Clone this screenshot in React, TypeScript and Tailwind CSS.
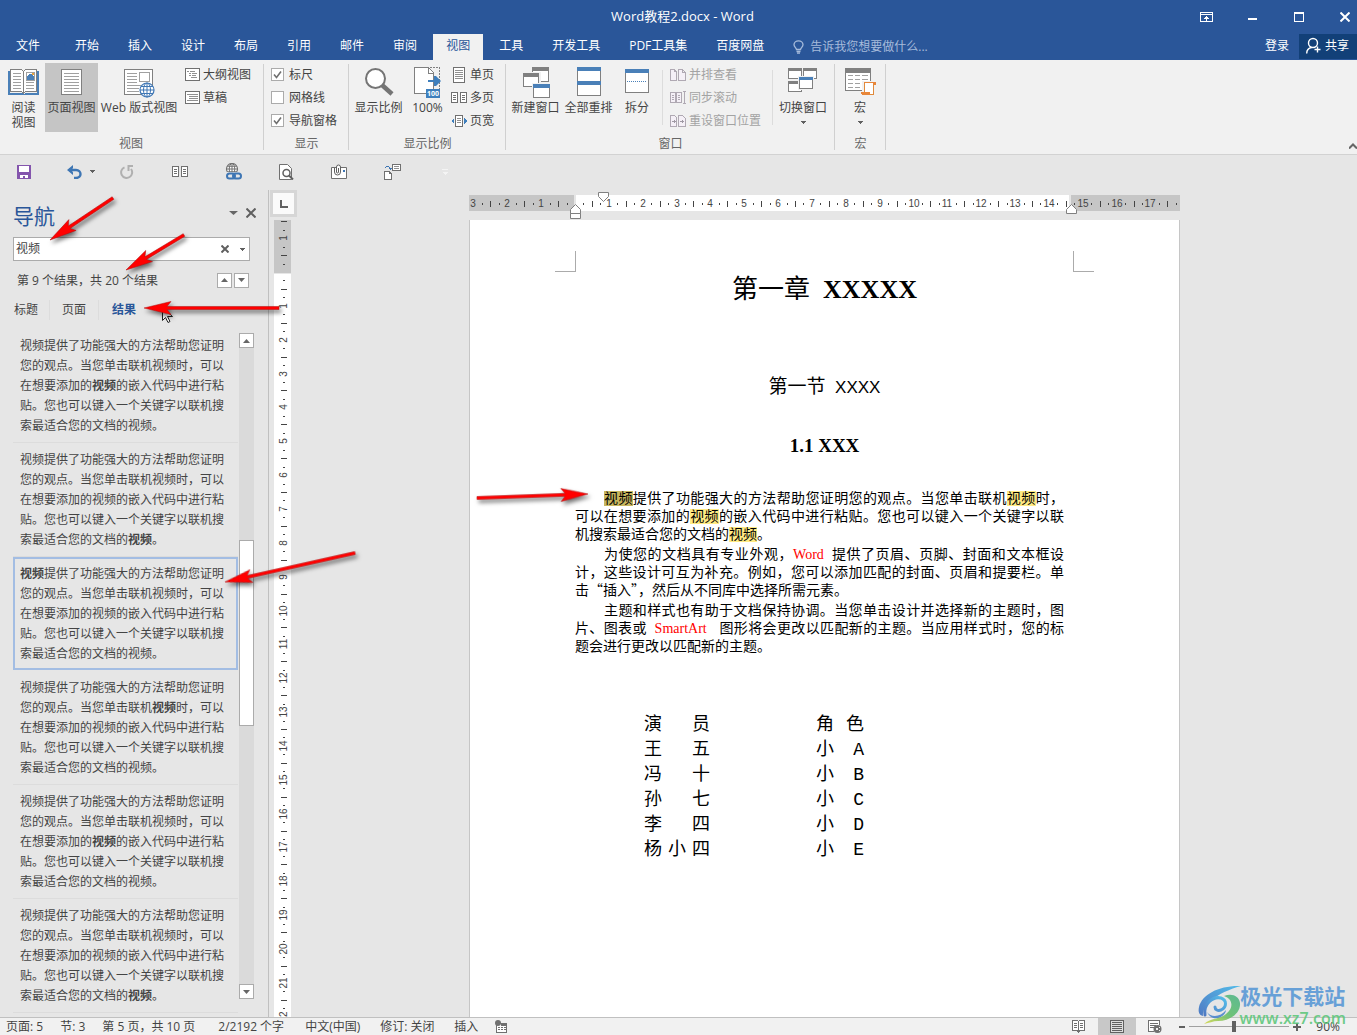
import { Fragment, useState } from "react";
import type { ReactNode } from "react";
import clsx from "clsx";

const TABS = ["开始", "插入", "设计", "布局", "引用", "邮件", "审阅", "视图", "工具", "开发工具", "PDF工具集", "百度网盘"];

// text of one search result, cut around every hit
const RESULT_PARTS = [
  "",
  "提供了功能强大的方法帮助您证明您的观点。当您单击联机",
  "时，可以在想要添加的",
  "的嵌入代码中进行粘贴。您也可以键入一个关键字以联机搜索最适合您的文档的",
  "。",
];

// index of the bold hit in each result
const RESULTS = [2, 3, 0, 1, 2, 3];

const CAST = [
  ["演员", "角色"],
  ["王五", "小 A"],
  ["冯十", "小 B"],
  ["孙七", "小 C"],
  ["李四", "小 D"],
  ["杨小四", "小 E"],
];

const STATUS = [
  { label: "页面: 5", width: "min-w-[37px]" },
  { label: "节: 3", width: "min-w-[25px]" },
  { label: "第 5 页，共 10 页", width: "min-w-[99px]" },
  { label: "2/2192 个字", width: "min-w-[70px]" },
  { label: "中文(中国)", width: "min-w-[58px]" },
  { label: "修订: 关闭", width: "min-w-[57px]" },
  { label: "插入", width: "min-w-[24px]" },
];

const CM = 33.85;

function Icon({ w, h, children, crisp = true }: { w: number; h: number; children: ReactNode; crisp?: boolean }) {
  return (
    <svg
      width={w}
      height={h}
      viewBox={`0 0 ${w} ${h}`}
      fill="none"
      shapeRendering={crisp ? "crispEdges" : "auto"}
      aria-hidden="true"
      className="shrink-0"
    >
      {children}
    </svg>
  );
}

/* ---------- Ribbon icons ---------- */

const ReadIcon = () => (
  <Icon w={31} h={32}>
    <path d="M0 4h2v22h12l1 1h1l1-1h12V4h2v24H0z" fill="#4a80b8" />
    <path d="M2.5 2.5h11l2 2 2-2h11v22h-11l-2 2-2-2h-11z" fill="#fff" stroke="#808080" />
    <path d="M15.5 4v22" stroke="#808080" />
    <path d="M5 6.5h8M5 9.5h8M5 12.5h8M5 15.5h8M5 18.5h8M5 21.5h8M18 15.5h8M18 18.5h8M18 21.5h8" stroke="#a0a0a0" />
    <path d="M18.5 5.5h8v8h-8z" fill="#fff" stroke="#a0a0a0" />
    <path d="M19 12v-3l2-2h2l3 3v3h-7z" fill="#4a80b8" />
    <path d="M24 6h2v2h-2z" fill="#e8a33d" />
  </Icon>
);

const PageIcon = () => (
  <Icon w={21} h={32}>
    <path d="M.5 2.5h20v25H.5z" fill="#fff" stroke="#808080" />
    <path d="M3 6.5h15M3 9.5h15M3 12.5h15M3 15.5h15M3 18.5h15M3 21.5h15M3 24.5h15" stroke="#a0a0a0" />
  </Icon>
);

const Globe = ({ x, y, r, color }: { x: number; y: number; r: number; color: string }) => (
  <g stroke={color} shapeRendering="auto" transform={`translate(${x} ${y})`}>
    <circle r={r} fill="#fff" strokeWidth="1.2" />
    <ellipse rx={r / 2} ry={r} />
    <path d={`M0 ${-r}V${r}M${-r} 0H${r}M${-r + 1} ${-r / 2}H${r - 1}M${-r + 1} ${r / 2}H${r - 1}`} />
  </g>
);

const WebIcon = () => (
  <Icon w={31} h={32}>
    <path d="M.5 2.5h28v25H.5z" fill="#fff" stroke="#808080" />
    <path d="M3 6.5h10M3 9.5h10M3 12.5h10M3 15.5h10M3 18.5h14M3 21.5h12M3 24.5h12" stroke="#a0a0a0" />
    <path d="M15.5 5.5h10v9h-10z" fill="#fff" stroke="#a0a0a0" />
    <Globe x={23} y={23} r={7} color="#3e76b4" />
  </Icon>
);

const OutlineIcon = () => (
  <Icon w={15} h={13}>
    <path d="M.5.5h14v12H.5z" fill="#fff" stroke="#707070" />
    <path d="M2 3.5h2M5 3.5h5M4 5.5h2M7 5.5h5M4 7.5h2M7 7.5h4M6 9.5h6" stroke="#909090" />
  </Icon>
);

const DraftIcon = () => (
  <Icon w={15} h={13}>
    <path d="M.5.5h14v12H.5z" fill="#fff" stroke="#707070" />
    <path d="M2 3.5h11M4 5.5h9M4 7.5h9M2 9.5h11" stroke="#909090" />
  </Icon>
);

const ZoomIcon = () => (
  <Icon w={30} h={32} crisp={false}>
    <path d="M18 18l10 9" stroke="#757575" strokeWidth="4.5" />
    <circle cx="11.5" cy="11.5" r="9.5" fill="#fff" stroke="#757575" strokeWidth="2" />
  </Icon>
);

const HundredIcon = () => (
  <Icon w={27} h={32}>
    <path d="M.5.5h14l5 5v21H.5z" fill="#fff" stroke="#808080" />
    <path d="M14.5.5v6h5" stroke="#808080" />
    <path d="M16 .5h9.5v21" stroke="#808080" strokeDasharray="2 1" />
    <path d="M14 13h6v-4h2l5 5-5 5h-2v-4h-6z" fill="#3e7fbd" shapeRendering="auto" />
    <path d="M12 22h14v9H12z" fill="#3e7fbd" />
    <text x="19" y="29" textAnchor="middle" fontSize="7" fontWeight="bold" fill="#fff">
      100
    </text>
  </Icon>
);

const OnePageIcon = () => (
  <Icon w={16} h={16}>
    <path d="M2.5.5h11v15h-11z" fill="#fff" stroke="#707070" />
    <path d="M4 3.5h8M4 5.5h8M4 7.5h8M4 9.5h8M4 11.5h8" stroke="#909090" />
  </Icon>
);

const TwoPages = ({ color = "#707070" }: { color?: string }) => (
  <Icon w={16} h={11}>
    <path d="M.5.5h6v10h-6zM9.5.5h6v10h-6z" fill="#fff" stroke={color} />
    <path d="M2 3.5h3M2 5.5h3M2 7.5h3M11 3.5h3M11 5.5h3M11 7.5h3" stroke={color} />
  </Icon>
);

const PageWidthIcon = () => (
  <Icon w={16} h={12}>
    <path d="M4.5.5h7v11h-7z" fill="#fff" stroke="#707070" />
    <path d="M6 3.5h4M6 5.5h4M6 7.5h4" stroke="#909090" />
    <path d="M3 3v6L0 6zM13 3v6l3-3z" fill="#3e7fbd" />
  </Icon>
);

const NewWindowIcon = () => (
  <Icon w={28} h={32}>
    <path d="M10.5 3v11h16V3" fill="#fff" stroke="#808080" />
    <path d="M10 0h17v4H10z" fill="#808080" />
    <path d="M0 5h19v16H0z" fill="#f1f1f1" />
    <path d="M1.5 8v11h15V8" fill="#fff" stroke="#808080" />
    <path d="M1 6h16v4H1z" fill="#808080" />
    <path d="M10 16h18v15H10z" fill="#f1f1f1" />
    <path d="M11.5 19v11h16V19" fill="#fff" stroke="#808080" />
    <path d="M11 17h17v4H11z" fill="#4a80b8" />
  </Icon>
);

const ArrangeIcon = () => (
  <Icon w={24} h={32}>
    <path d="M.5.5h23v28H.5z" fill="#fff" stroke="#808080" />
    <path d="M0 0h24v4H0zM0 14h24v4H0z" fill="#4a80b8" />
  </Icon>
);

const SplitIcon = () => (
  <Icon w={24} h={32}>
    <path d="M.5 2.5h23v23H.5z" fill="#fff" stroke="#808080" />
    <path d="M0 2h24v4H0z" fill="#4a80b8" />
    <path d="M2 14.5h20" stroke="#4a80b8" strokeDasharray="1 1" />
  </Icon>
);

const SideBySideIcon = () => (
  <Icon w={16} h={12}>
    <path d="M.5.5h4l2 2v9h-6zM8.5.5h4l3 3v8h-7zM4.5.5v2h2M12.5.5v3h3" fill="#f5f0f7" stroke="#b0a9b3" />
  </Icon>
);

const SyncIcon = () => (
  <Icon w={16} h={15}>
    <path d="M.5 2.5h5v10h-5zM6.5 2.5h5v10h-5z" fill="#f5f0f7" stroke="#b0a9b3" />
    <path d="M2 5.5h2M2 7.5h2M2 9.5h2M8 5.5h2M8 7.5h2M8 9.5h2M14.5 1v13M13 1.5h3M13 13.5h3" stroke="#b0a9b3" />
  </Icon>
);

const ResetIcon = () => (
  <Icon w={16} h={12}>
    <path d="M.5.5h4l2 2v9h-6zM8.5.5h4l3 3v8h-7z" fill="#f5f0f7" stroke="#b0a9b3" />
    <path d="M2 6.5h4M4 5v3M10 6.5h4M12 5v3" stroke="#a09aa4" />
  </Icon>
);

const SwitchIcon = () => (
  <Icon w={30} h={32}>
    <path d="M.5 1.5h13v10H.5zM15.5 1.5h13v10h-13zM.5 14.5h13v10H.5z" fill="#fff" stroke="#808080" />
    <path d="M0 1h14v3H0zM15 1h14v3H15zM0 14h14v3H0z" fill="#808080" />
    <path d="M10 9h16v14H10z" fill="#f1f1f1" />
    <path d="M11.5 10.5h13v11h-13z" fill="#fff" stroke="#808080" />
    <path d="M11 10h14v3H11z" fill="#4a80b8" />
  </Icon>
);

const MacroIcon = () => (
  <Icon w={31} h={32}>
    <path d="M.5 1.5h25v22H.5z" fill="#fff" stroke="#808080" />
    <path d="M0 1h26v5H0z" fill="#808080" />
    <path
      d="M3 8.5h5M10 8.5h5M17 8.5h6M3 12.5h5M10 12.5h5M17 12.5h6M3 16.5h5M10 16.5h5M3 20.5h5M10 20.5h5"
      stroke="#a0a0a0"
    />
    <path d="M17 14h12v14H17z" fill="#f1f1f1" />
    <path d="M19.5 15.5h9v12h-9z" fill="#fff" stroke="#e08a3c" />
    <path d="M19 15h12v3h-3v-2h-9zM16 25h9v3h-8l-1-1z" fill="#e8873a" />
  </Icon>
);

/* ---------- Ribbon parts ---------- */

const Caret = () => (
  <Icon w={6} h={3}>
    <path d="M0 0h6L3 3z" fill="#606060" />
  </Icon>
);

interface BigButtonProps {
  icon: ReactNode;
  label: ReactNode;
  className: string;
  active?: boolean;
  menu?: boolean;
}

function BigButton({ icon, label, className, active, menu }: BigButtonProps) {
  return (
    <button
      type="button"
      className={clsx(
        "flex h-[69px] shrink-0 flex-col items-center pt-1 leading-[15px] whitespace-nowrap",
        active ? "bg-[#c5c5c5]" : "hover:bg-[#dadada]",
        className
      )}
    >
      <span className="flex h-[33px] items-start">{icon}</span>
      <span>{label}</span>
      {menu && (
        <span className="mt-[6px]">
          <Caret />
        </span>
      )}
    </button>
  );
}

function SmallButton({ icon, label, disabled }: { icon: ReactNode; label: string; disabled?: boolean }) {
  return (
    <button
      type="button"
      disabled={disabled}
      className="flex h-[23px] items-center gap-[3px] whitespace-nowrap enabled:hover:bg-[#dadada] disabled:text-[#a3a3a3]"
    >
      <span className="flex w-4 justify-center">{icon}</span>
      {label}
    </button>
  );
}

function RibbonCheck({ label, defaultChecked }: { label: string; defaultChecked?: boolean }) {
  return (
    <label className="flex h-[23px] items-center gap-[5px]">
      <span className="relative flex">
        <input
          type="checkbox"
          defaultChecked={defaultChecked}
          className="peer size-[13px] appearance-none border border-[#ababab] bg-white"
        />
        <svg
          viewBox="0 0 13 13"
          className="pointer-events-none absolute inset-0 hidden size-[13px] peer-checked:block"
          fill="none"
          stroke="#707070"
          strokeWidth="1.6"
        >
          <path d="M3 6.5l2.5 3L10 3.5" />
        </svg>
      </span>
      {label}
    </label>
  );
}

function Group({ label, className, children }: { label: string; className: string; children: ReactNode }) {
  return (
    <section
      aria-label={label}
      className={clsx("relative flex h-[94px] shrink-0 flex-col justify-between pt-[3px] pb-[2px]", className)}
    >
      <div className="flex">{children}</div>
      <div className="text-center leading-4 text-[#666]">{label}</div>
      <span className="absolute top-1 right-0 bottom-1 w-px bg-[#d0d0d0]" />
    </section>
  );
}

function Ribbon() {
  return (
    <div className="flex h-[95px] shrink-0 border-b border-[#d2d2d2] bg-[#f1f1f1] text-[#444]">
      <Group label="视图" className="w-[264px] pr-1 pl-[2px]">
        <BigButton icon={<ReadIcon />} label={<>阅读<br />视图</>} className="w-[43px]" />
        <BigButton icon={<PageIcon />} label="页面视图" className="w-[53px]" active />
        <BigButton icon={<WebIcon />} label="Web 版式视图" className="w-[82px]" />
        <div className="pl-1">
          <SmallButton icon={<OutlineIcon />} label="大纲视图" />
          <SmallButton icon={<DraftIcon />} label="草稿" />
        </div>
      </Group>
      <Group label="显示" className="w-[85px]">
        <div className="pl-[7px]">
          <RibbonCheck label="标尺" defaultChecked />
          <RibbonCheck label="网格线" />
          <RibbonCheck label="导航窗格" defaultChecked />
        </div>
      </Group>
      <Group label="显示比例" className="w-[157px]">
        <BigButton icon={<ZoomIcon />} label="显示比例" className="ml-px w-[57px]" />
        <BigButton icon={<HundredIcon />} label="100%" className="w-[41px]" />
        <div className="pl-[3px]">
          <SmallButton icon={<OnePageIcon />} label="单页" />
          <SmallButton icon={<TwoPages />} label="多页" />
          <SmallButton icon={<PageWidthIcon />} label="页宽" />
        </div>
      </Group>
      <Group label="窗口" className="w-[329px]">
        <BigButton icon={<NewWindowIcon />} label="新建窗口" className="ml-[3px] w-[53px]" />
        <BigButton icon={<ArrangeIcon />} label="全部重排" className="w-[53px]" />
        <BigButton icon={<SplitIcon />} label="拆分" className="w-[44px]" />
        <span className="mt-[7px] ml-[3px] h-[55px] w-px bg-[#dcdcdc]" />
        <div className="pr-[11px] pl-[7px]">
          <SmallButton icon={<SideBySideIcon />} label="并排查看" disabled />
          <SmallButton icon={<SyncIcon />} label="同步滚动" disabled />
          <SmallButton icon={<ResetIcon />} label="重设窗口位置" disabled />
        </div>
        <span className="mt-[7px] h-[55px] w-px bg-[#dcdcdc]" />
        <BigButton icon={<SwitchIcon />} label="切换窗口" className="ml-[3px] w-[54px]" menu />
      </Group>
      <Group label="宏" className="w-[51px]">
        <BigButton icon={<MacroIcon />} label="宏" className="w-[50px]" menu />
      </Group>
      <button type="button" aria-label="折叠功能区" className="mt-auto mb-[5px] ml-auto">
        <svg width="8" height="6" fill="none" stroke="#666" strokeWidth="2" aria-hidden="true">
          <path d="M0 5.5l4-4 4 4" />
        </svg>
      </button>
    </div>
  );
}

/* ---------- Header ---------- */

function Header() {
  return (
    <header className="shrink-0 bg-[#2a5699] text-white">
      <div className="grid h-[34px] grid-cols-[1fr_auto_1fr] items-center">
        <h1 className="col-start-2 pl-2 text-[13px]">Word教程2.docx - Word</h1>
        <div className="flex items-center justify-end gap-[35px] pr-[7px]">
          <button type="button" aria-label="功能区显示选项">
            <Icon w={13} h={10}>
              <path d="M.5.5h12v9H.5zM1 2.5h11M6.5 4v5M4 6.5h5M5 5.5h3" stroke="#fff" />
            </Icon>
          </button>
          <button type="button" aria-label="最小化">
            <Icon w={10} h={10}>
              <path d="M0 6h9v2H0z" fill="#fff" />
            </Icon>
          </button>
          <button type="button" aria-label="最大化">
            <Icon w={12} h={10}>
              <path d="M1.5.5h9v9h-9zM1 1.5h10" stroke="#fff" />
            </Icon>
          </button>
          <button type="button" aria-label="关闭">
            <Icon w={10} h={10} crisp={false}>
              <path d="M.5.5l9 9m0-9l-9 9" stroke="#fff" strokeWidth="2" />
            </Icon>
          </button>
        </div>
      </div>
      <nav className="flex h-[26px] items-stretch pl-[3px] whitespace-nowrap">
        <button type="button" className="mr-[9px] px-[13px] pb-[3px]">文件</button>
        <div className="flex gap-[3px]">
          {TABS.map((tab) => (
            <button
              key={tab}
              type="button"
              className={clsx("px-[13px] pb-[3px]", tab === "视图" ? "bg-[#f1f1f1] text-[#2a5699]" : "hover:bg-[#3e6db5]")}
            >
              {tab}
            </button>
          ))}
        </div>
        <button type="button" className="ml-4 flex items-center gap-[6px] pb-px text-[#a6bbdb]">
          <Icon w={11} h={14} crisp={false}>
            <path
              d="M3.5 9.5C3.5 8 1 7 1 4.8a4.5 4 0 0 1 9 0C10 7 7.5 8 7.5 9.5zM3.5 11.5h4M4 13.2h3"
              stroke="#a6bbdb"
              strokeWidth="1.3"
            />
          </Icon>
          告诉我您想要做什么...
        </button>
        <button type="button" className="mr-[10px] ml-auto pb-[3px]">登录</button>
        <button type="button" className="mb-px flex items-center gap-1 bg-[#124078] pr-2 pb-[2px] pl-[7px]">
          <Icon w={15} h={17} crisp={false}>
            <circle cx="7" cy="6" r="4.5" stroke="#fff" strokeWidth="1.4" />
            <path d="M.7 16.5c0-3.5 2-5.5 5-6M11.5 9.5v6M8.5 12.5h6" stroke="#fff" strokeWidth="1.4" />
          </Icon>
          共享
        </button>
      </nav>
    </header>
  );
}

function QuickAccess() {
  const button = "flex h-6 w-6 items-center justify-center";
  return (
    <div className="flex h-[35px] shrink-0 items-center pb-[2px] pl-3">
      <button type="button" aria-label="保存" className={button}>
        <Icon w={14} h={14}>
          <path d="M0 0h14v14H0z" fill="#8455ad" />
          <path d="M2 1h10v6H2zM3 10h8v3H8v-2H6v2H3z" fill="#fff" />
        </Icon>
      </button>
      <button type="button" aria-label="撤消" className={clsx(button, "ml-[26px]")}>
        <Icon w={15} h={14} crisp={false}>
          <path d="M2 5h7c6 0 6 8 0 8H7" stroke="#3e76b4" strokeWidth="2.4" />
          <path d="M0 5L6 0v3L4.5 5 6 7.5V10z" fill="#3e76b4" />
        </Icon>
      </button>
      <button type="button" aria-label="撤消列表" className="flex w-[11px] justify-center">
        <Caret />
      </button>
      <div className="ml-[18px] flex gap-[29px]">
        <button type="button" aria-label="重复" className={button}>
          <Icon w={14} h={14} crisp={false}>
            <path d="M4.5 2.3A5.5 5.5 0 1 0 11 4" stroke="#b0b0b0" strokeWidth="2" />
            <path d="M7.5 0H13v2H9.5v4h-2z" fill="#b0b0b0" />
          </Icon>
        </button>
        <button type="button" aria-label="多页" className={button}>
          <TwoPages />
        </button>
        <button type="button" aria-label="超链接" className={button}>
          <Icon w={17} h={17} crisp={false}>
            <Globe x={7} y={6} r={5.5} color="#707070" />
            <path d="M2 9h15v8H2z" fill="#e6e6e6" />
            <rect x="2" y="10.5" width="8" height="5" rx="2.5" stroke="#3e76b4" strokeWidth="2" />
            <rect x="8" y="10.5" width="8" height="5" rx="2.5" stroke="#3e76b4" strokeWidth="2" />
          </Icon>
        </button>
        <button type="button" aria-label="打印预览" className={button}>
          <Icon w={15} h={16} crisp={false}>
            <path d="M.5.5h8l4 4v11H.5z" fill="#fff" stroke="#707070" />
            <circle cx="7.5" cy="9" r="3.5" fill="#fff" stroke="#606060" strokeWidth="1.5" />
            <path d="M10 11.5l4 4" stroke="#606060" strokeWidth="2" />
          </Icon>
        </button>
        <button type="button" aria-label="电子邮件附件" className={button}>
          <Icon w={17} h={16} crisp={false}>
            <path d="M.5 3.5h15v11H.5z" fill="#fff" stroke="#707070" />
            <path d="M12 6h2v2h-2z" fill="#3e76b4" />
            <path d="M3.5 4v4a3 3 0 0 0 6 0V3a2 2 0 0 0-4 0v5a1 1 0 0 0 2 0V4" fill="#fff" stroke="#606060" />
          </Icon>
        </button>
        <button type="button" aria-label="复制格式" className={button}>
          <Icon w={17} h={16}>
            <path d="M8.5.5h8v6h-8zM.5 7.5h5l2 2v6h-7zM5.5 7.5v2h2" fill="#fff" stroke="#707070" />
            <path d="M10 2.5h5M10 4.5h5" stroke="#909090" />
            <path d="M1 4c1-2 4-2 5 0" stroke="#3e76b4" />
            <path d="M4 4h4L6 6z" fill="#3e76b4" />
          </Icon>
        </button>
        <button type="button" aria-label="自定义快速访问工具栏" className={button}>
          <Icon w={6} h={6}>
            <path d="M0 0h6v1H0zM0 3h6L3 6z" fill="#f4f4f4" />
          </Icon>
        </button>
      </div>
    </div>
  );
}

/* ---------- Navigation pane ---------- */

function Arrow({ up, w = 7 }: { up?: boolean; w?: number }) {
  return (
    <svg width={w} height="4" viewBox="0 0 8 4" preserveAspectRatio="none" aria-hidden="true">
      <path d={up ? "M0 4h8L4 0z" : "M0 0h8L4 4z"} fill="#666" />
    </svg>
  );
}

function Result({ hit, selected }: { hit: number; selected: boolean }) {
  return (
    <li className={clsx("border-b", selected ? "border-transparent" : "border-[#dcdcdc]")}>
      <button
        type="button"
        className={clsx(
          "flex h-[113px] w-full items-start border-2 px-[5px] pt-[5px] text-left leading-5",
          selected ? "border-[#a3bde3]" : "border-transparent"
        )}
      >
        <span>
          {RESULT_PARTS.map((part, i) => (
            <Fragment key={i}>
              {part}
              {i < 4 && (i === hit ? <b>视频</b> : "视频")}
            </Fragment>
          ))}
        </span>
      </button>
    </li>
  );
}

function NavigationPane() {
  const [query, setQuery] = useState("视频");
  const square = "flex size-[15px] items-center justify-center border border-[#ababab] bg-white";

  return (
    <aside className="flex w-[269px] shrink-0 flex-col border-r border-[#c0c0c0] pl-[13px] text-[#444]">
      <div className="flex h-[47px] items-start pt-[13px] pr-3">
        <h2 className="flex-1 text-[21px] leading-[26px] text-[#2a5699]">导航</h2>
        <button type="button" aria-label="任务窗格选项" className="flex h-5 items-center">
          <Arrow w={9} />
        </button>
        <button type="button" aria-label="关闭" className="ml-2 flex h-5 items-center">
          <Icon w={10} h={10} crisp={false}>
            <path d="M.5.5l9 9m0-9l-9 9" stroke="#606060" strokeWidth="2" />
          </Icon>
        </button>
      </div>
      <div className="mr-[18px] flex h-6 items-center border border-[#ababab] bg-white pr-1">
        <input
          aria-label="搜索文档"
          value={query}
          onChange={(e) => setQuery(e.target.value)}
          className="min-w-0 flex-1 pl-[2px] outline-none"
        />
        <button type="button" aria-label="清除" onClick={() => setQuery("")} className="mr-[10px]">
          <Icon w={8} h={8} crisp={false}>
            <path d="M.5.5l7 7m0-7l-7 7" stroke="#606060" strokeWidth="2" />
          </Icon>
        </button>
        <button type="button" aria-label="搜索选项" className="flex">
          <Caret />
        </button>
      </div>
      <div className="mt-[9px] mr-[19px] flex h-5 items-center gap-[2px] pl-1">
        <span className="flex-1 pt-[2px] leading-5">第 9 个结果，共 20 个结果</span>
        <button type="button" aria-label="上一个" className={square}>
          <Arrow up />
        </button>
        <button type="button" aria-label="下一个" className={square}>
          <Arrow />
        </button>
      </div>
      <div className="mt-[10px] flex h-5 items-stretch pl-px leading-5">
        <button type="button" className="pr-[11px]">标题</button>
        <button type="button" className="border-x border-[#dcdcdc] px-3">页面</button>
        <button type="button" className="pl-[13px] font-bold text-[#2a5699]">结果</button>
      </div>
      <div className="mt-[9px] flex min-h-0 flex-1">
        <ol className="w-[225px] overflow-hidden">
          {RESULTS.map((hit, i) => (
            <Result key={i} hit={hit} selected={i === 2} />
          ))}
        </ol>
        <div className="mt-1 mb-[18px] ml-px flex w-[15px] flex-col bg-[#dadada]">
          <button type="button" aria-label="向上滚动" className={square}>
            <Arrow up />
          </button>
          <div className="mt-[192px] h-[186px] border border-[#ababab] bg-white" />
          <button type="button" aria-label="向下滚动" className={clsx(square, "mt-auto")}>
            <Arrow />
          </button>
        </div>
      </div>
    </aside>
  );
}

/* ---------- Rulers ---------- */

function Marks({ from, to, zero, vertical }: { from: number; to: number; zero: number; vertical?: boolean }) {
  const steps = [];
  for (let q = from * 4; q <= to * 4; q++) if (q !== 0) steps.push(q);

  return (
    <>
      {steps.map((q) => {
        const at = Math.round(zero + (q * CM) / 4);
        if (q % 4 === 0) {
          return vertical ? (
            <text key={q} transform={`translate(13 ${at}) rotate(-90)`} textAnchor="middle" fontSize="10" fill="#444">
              {Math.abs(q / 4)}
            </text>
          ) : (
            <text key={q} x={at} y="12" textAnchor="middle" fontSize="10" fill="#444">
              {Math.abs(q / 4)}
            </text>
          );
        }
        const size = q % 2 === 0 ? 6 : 2;
        return vertical ? (
          <rect key={q} x={10 - size / 2} y={at} width={size} height="1" fill="#444" />
        ) : (
          <rect key={q} x={at} y={9 - size / 2} width="1" height={size} fill="#444" />
        );
      })}
    </>
  );
}

const rulerFont = "font-['Liberation_Sans',sans-serif]";

function VerticalRuler() {
  return (
    <div className="flex w-[29px] shrink-0 flex-col">
      <button
        type="button"
        aria-label="制表符"
        className="ml-px flex h-[27px] w-[27px] items-center justify-center border-[3px] border-[#d6d6d6] bg-[#fafafa]"
      >
        <Icon w={8} h={8}>
          <path d="M1 0v7h7" stroke="#606060" strokeWidth="2" />
        </Icon>
      </button>
      <svg className={clsx("mt-[3px] ml-[5px] min-h-0 w-[17px] flex-1", rulerFont)} aria-hidden="true">
        <rect width="17" height="53" fill="#c6c6c6" />
        <rect y="54" width="17" height="100%" fill="#fff" />
        <Marks from={-1.5} to={22} zero={52} vertical />
      </svg>
    </div>
  );
}

function HorizontalRuler() {
  return (
    <svg width="711" height="16" className={clsx("overflow-visible", rulerFont)} aria-hidden="true">
      <rect width="105" height="16" fill="#c6c6c6" />
      <rect x="107" width="493" height="16" fill="#fff" />
      <rect x="602" width="109" height="16" fill="#c6c6c6" />
      <Marks from={-3} to={17.75} zero={106} />
      <g fill="#fff" stroke="#808080">
        <path d="M129.5-2.5h10v4l-5 5-5-5z" />
        <path d="M101.5 18.5v-4l5-5 5 5v4zM101.5 18.5h10v5h-10z" />
        <path d="M597.5 18.5v-4l5-5 5 5v4z" />
      </g>
    </svg>
  );
}

/* ---------- Document ---------- */

const Hit = ({ current }: { current?: boolean }) => (
  <mark className={clsx("text-black", current ? "bg-[#c8b75f]" : "bg-[#ffeb84]")}>视频</mark>
);

function DocumentPage() {
  return (
    <article className="mt-[9px] w-full max-w-[711px] flex-1 border-x border-[#c6c6c6] bg-white font-['Liberation_Serif','Noto_Sans_CJK_SC',serif] text-black">
      <div className="flex justify-between px-[85px] pt-[31px]">
        <span className="size-[21px] border-r border-b border-[#ababab]" />
        <span className="size-[21px] border-b border-l border-[#ababab]" />
      </div>
      <h1 className="mt-px text-center text-[26px] leading-[34px]">
        第一章&nbsp; <b>XXXXX</b>
      </h1>
      <h2 className="mt-[66px] text-center text-[19px] leading-7">
        第一节&nbsp; <span className="font-['Liberation_Sans',sans-serif] text-[17px]">XXXX</span>
      </h2>
      <h3 className="mt-8 text-center text-[19px] leading-6 font-bold">1.1 XXX</h3>
      <div className="mt-8 flex flex-col gap-[2px] pr-[115px] pl-[105px] text-justify indent-[29px] text-[14px] leading-[18px]">
        <p>
          <Hit current />
          提供了功能强大的方法帮助您证明您的观点。当您单击联机
          <Hit />
          时，可以在想要添加的
          <Hit />
          的嵌入代码中进行粘贴。您也可以键入一个关键字以联机搜索最适合您的文档的
          <Hit />。
        </p>
        <p>
          为使您的文档具有专业外观，<span className="text-[#f00]">Word</span>
          &nbsp; 提供了页眉、页脚、封面和文本框设计，这些设计可互为补充。例如，您可以添加匹配的封面、页眉和提要栏。单击
          <span className="font-['Noto_Sans_CJK_SC',sans-serif] leading-none">“插入”</span>
          ，然后从不同库中选择所需元素。
        </p>
        <p>
          主题和样式也有助于文档保持协调。当您单击设计并选择新的主题时，图片、图表或&nbsp;{" "}
          <span className="mr-[5px] text-[#f00]">SmartArt</span>
          &nbsp; 图形将会更改以匹配新的主题。当应用样式时，您的标题会进行更改以匹配新的主题。
        </p>
      </div>
      <table className="mt-[57px] ml-[174px] font-['Liberation_Mono','Noto_Sans_CJK_SC',monospace] text-[18px] leading-[25px]">
        <tbody>
          {CAST.map(([actor, role]) => (
            <tr key={actor}>
              <td className="w-[172px] p-0">
                <div className="w-[66px] [text-align-last:justify]">{actor}</div>
              </td>
              <td className="w-[48px] p-0 [text-align-last:justify]">{role}</td>
            </tr>
          ))}
        </tbody>
      </table>
    </article>
  );
}

/* ---------- Status bar ---------- */

function StatusBar() {
  return (
    <footer className="flex h-[18px] shrink-0 items-center border-t border-[#c0c0c0] bg-[#f1f1f1] pl-[6px] leading-[17px] whitespace-nowrap text-[#444]">
      <div className="flex gap-[17px]">
        {STATUS.map(({ label, width }) => (
          <button key={label} type="button" className={clsx("text-left", width)}>
            {label}
          </button>
        ))}
        <button type="button" aria-label="宏录制" className="flex items-center">
          <Icon w={13} h={13}>
            <path d="M1.5 3.5h10v9h-10z" fill="#fff" stroke="#707070" />
            <path d="M6 3h6v3H6z" fill="#707070" />
            <path d="M3 7.5h2M6 7.5h2M9 7.5h2M3 9.5h2M6 9.5h2M9 9.5h2" stroke="#707070" />
            <circle cx="3" cy="3" r="3" fill="#707070" shapeRendering="auto" />
          </Icon>
        </button>
      </div>
      <div className="ml-auto flex items-center self-stretch pr-[17px]">
        <button type="button" aria-label="阅读视图" className="mr-[13px]">
          <Icon w={13} h={13}>
            <path d="M.5.5h5l1 1 1-1h5v10h-5l-1 2-1-2h-5zM6.5 1v11" fill="#fff" stroke="#707070" />
            <path d="M2 3.5h3M2 5.5h3M2 7.5h3M8 3.5h3M8 5.5h3M8 7.5h3" stroke="#707070" />
          </Icon>
        </button>
        <button
          type="button"
          aria-label="页面视图"
          className="flex w-[38px] items-center justify-center self-stretch bg-[#c8c8c8]"
        >
          <Icon w={14} h={13}>
            <path d="M.5.5h13v12H.5z" fill="#ddd" stroke="#606060" />
            <path d="M2 2.5h10M2 4.5h10M2 6.5h10M2 8.5h10M2 10.5h10" stroke="#606060" />
          </Icon>
        </button>
        <button type="button" aria-label="Web 版式视图" className="mr-[17px] ml-3">
          <Icon w={14} h={13}>
            <path d="M6 11.5H.5V.5h11V5" fill="#fff" stroke="#707070" />
            <path d="M2 3.5h8M2 5.5h6M2 7.5h4" stroke="#707070" />
            <circle cx="9.5" cy="9" r="4" fill="#707070" shapeRendering="auto" />
            <path d="M8 8h2v2H8zM11 7h1v1h-1zM11 10h1v1h-1z" fill="#f1f1f1" />
          </Icon>
        </button>
        <button type="button" aria-label="缩小" className="flex">
          <Icon w={6} h={8}>
            <path d="M0 3h6v2H0z" fill="#606060" />
          </Icon>
        </button>
        <input
          type="range"
          aria-label="显示比例"
          min={10}
          max={190}
          defaultValue={90}
          className="mx-1 h-[11px] w-[100px] appearance-none bg-[linear-gradient(#a0a0a0,#a0a0a0)] bg-[length:100%_1px] bg-center bg-no-repeat [&::-webkit-slider-thumb]:h-[11px] [&::-webkit-slider-thumb]:w-1 [&::-webkit-slider-thumb]:appearance-none [&::-webkit-slider-thumb]:bg-[#606060]"
        />
        <button type="button" aria-label="放大" className="flex">
          <Icon w={8} h={8}>
            <path d="M0 3h8v2H0zM3 0h2v8H3z" fill="#606060" />
          </Icon>
        </button>
        <button type="button" className="ml-[15px]">90%</button>
      </div>
    </footer>
  );
}

/* ---------- Overlays ---------- */

const ARROWS = [
  { from: [113, 198], to: [50, 240] },
  { from: [184, 235], to: [126, 270] },
  { from: [279, 308], to: [144, 308] },
  { from: [355, 553], to: [225, 582] },
  { from: [477, 498], to: [588, 494] },
];

function Annotations() {
  return (
    <svg className="pointer-events-none absolute inset-0 size-full" aria-hidden="true">
      <path d="M162.5 307.5v13l3-3 2.5 5 2-1-2.5-5h5z" fill="#fff" stroke="#222" />
      <g fill="#f00" stroke="#b01010" strokeWidth="0.5" className="drop-shadow-[2px_3px_2px_rgba(0,0,0,0.55)]">
        {ARROWS.map(({ from: [x1, y1], to: [x2, y2] }, i) => {
          const length = Math.hypot(x2 - x1, y2 - y1);
          const angle = (Math.atan2(y1 - y2, x1 - x2) * 180) / Math.PI;
          return (
            <path
              key={i}
              transform={`translate(${x2} ${y2}) rotate(${angle})`}
              d={`M0 0L27-6.5 23-1.5 ${length}-1.5v3L23 1.5 27 6.5z`}
            />
          );
        })}
      </g>
    </svg>
  );
}

function Watermark() {
  return (
    <div className="pointer-events-none absolute right-[11px] bottom-[7px] flex items-center opacity-90">
      <svg width="43" height="42" viewBox="0 0 43 42" aria-hidden="true">
        <defs>
          <linearGradient id="blue" x1="0" y1="1" x2="1" y2="0">
            <stop offset="0" stopColor="#3f6fc0" />
            <stop offset="1" stopColor="#45b8ea" />
          </linearGradient>
          <linearGradient id="green" x1="0" y1="1" x2="1" y2="0">
            <stop offset="0" stopColor="#d8d84a" />
            <stop offset="0.5" stopColor="#63bf6c" />
            <stop offset="1" stopColor="#4fb58b" />
          </linearGradient>
        </defs>
        <path d="M43 1C22 0 4 9 1 22c-1 5 0 8 4 9C4 20 18 8 43 1z" fill="url(#blue)" />
        <path
          d="M7 30C5 19 15 11 23 13c6 2 6 9 0 12-3 1-6 0-6-3"
          fill="none"
          stroke="url(#blue)"
          strokeWidth="3"
          strokeLinecap="round"
        />
        <path d="M9 27c4 6 14 5 19-2-1 8-14 13-19 2z" fill="#4b86cc" />
        <path d="M26 11c8-3 15 0 16 7 1 10-10 18-22 18-5 0-9 2-14 3 8-7 15-4 22-10 8-6 7-15-2-18z" fill="url(#green)" />
      </svg>
      <div className="-ml-px text-center whitespace-nowrap">
        <div className="text-[21px] leading-6 font-bold text-[#5a99d6]">极光下载站</div>
        <div className="text-[16px] leading-5 font-semibold text-[#5fc77c]">www.xz7.com</div>
      </div>
    </div>
  );
}

export default function App() {
  return (
    <div className="relative flex h-screen flex-col overflow-hidden bg-[#e6e6e6] font-['Open_Sans','Noto_Sans_CJK_SC',sans-serif] text-[12px]">
      <Header />
      <Ribbon />
      <QuickAccess />
      <main className="flex min-h-0 flex-1">
        <NavigationPane />
        <VerticalRuler />
        <div className="flex min-w-0 flex-1 flex-col items-center overflow-hidden pt-[5px] pr-[6px]">
          <HorizontalRuler />
          <DocumentPage />
        </div>
      </main>
      <StatusBar />
      <Annotations />
      <Watermark />
    </div>
  );
}
